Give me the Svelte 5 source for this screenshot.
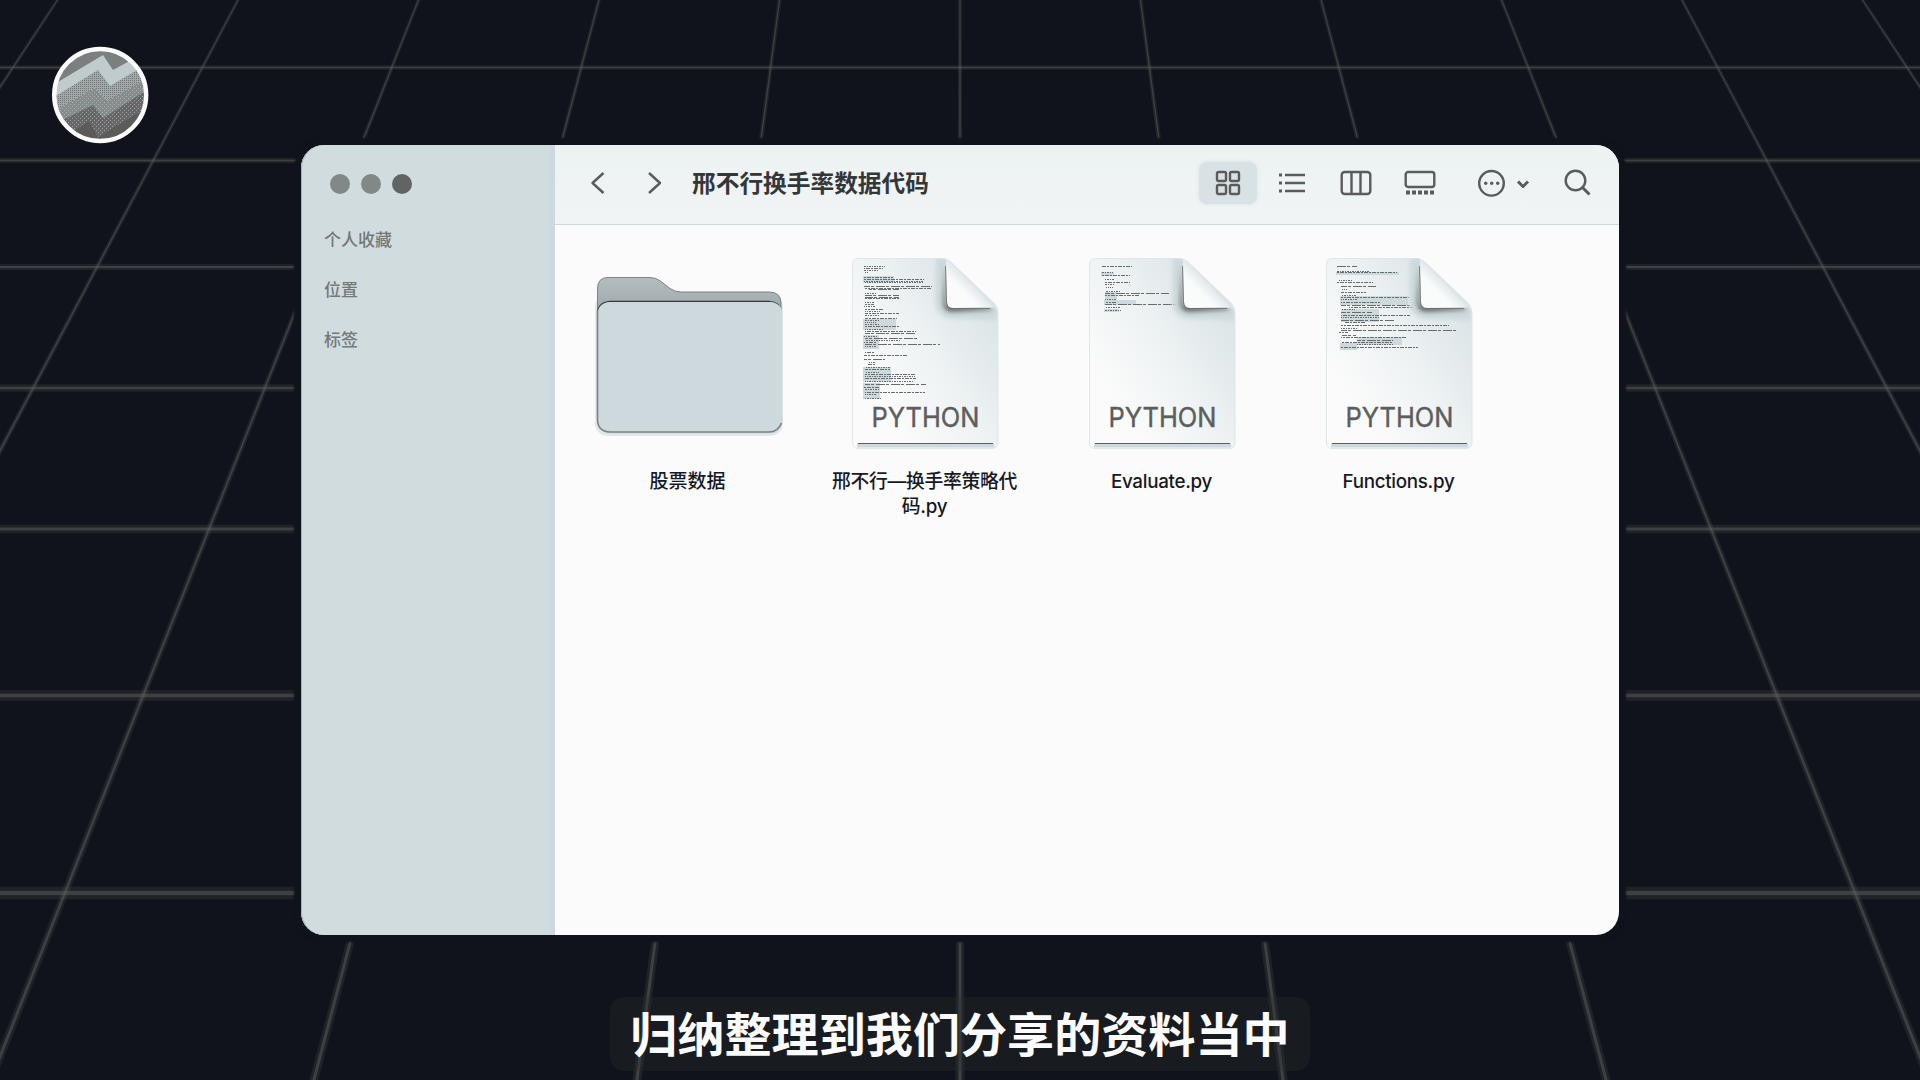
<script>
  // Perspective floor grid: horizontals as [y, thickness], verticals by column index.
  const rows = [[67.5, 2.2], [160.5, 2.6], [267, 3.2], [388, 3.8], [529, 4.4], [695.5, 5.4], [893, 6.4]];
  const cols = [-5, -4, -3, -2, -1, 0, 1, 2, 3, 4, 5].map((k) => {
    const top = 960 + k * 180.5;
    const end = 960 + k * (180.5 + 0.132 * 1080);
    return {
      core: `${top - 0.6},0 ${top + 0.6},0 ${end + 1.6},1080 ${end - 1.6},1080`,
      glow: `${top - 2},0 ${top + 2},0 ${end + 4.5},1080 ${end - 4.5},1080`
    };
  });

  // Thumbnail code lines: [y, x, width, dash pattern index]
  const dashes = ['2 1 1 1', '4 1 2 1', '9 1 3 2', '1 1'];
  const files = [
    {
      name: '邢不行—换手率策略代码.py',
      shade: [[18, 26, 31, 7], [18, 69, 33, 11], [18, 85, 16, 14], [18, 117, 28, 15], [18, 133, 17, 16]],
      code: [
        [16.5, 19, 21, 0], [18.5, 19, 19, 1], [20.5, 19, 14, 0], [22, 19, 5, 3],
        [27.5, 19, 29, 1], [29.5, 18, 61, 1], [31, 18, 61, 0], [32.5, 20, 58, 0],
        [36, 19, 68, 2], [38, 20, 67, 1], [39.5, 24, 30, 2], [43, 20, 12, 0], [45, 20, 34, 2], [47, 20, 34, 2], [48.5, 20, 34, 1],
        [52.5, 20, 10, 0], [54.5, 20, 9, 1], [56.5, 19, 12, 0], [59, 20, 18, 1], [61, 20, 15, 0], [63.5, 20, 34, 1], [65.5, 20, 15, 0],
        [68, 20, 32, 1], [70, 20, 15, 0], [72, 20, 12, 3], [74, 20, 15, 0], [76.5, 20, 34, 1], [79, 20, 18, 0],
        [81.5, 20, 51, 1], [83, 20, 51, 2], [86, 19, 14, 0], [88.5, 20, 53, 2], [90, 20, 35, 0], [92, 19, 13, 1], [94, 20, 75, 2], [96, 20, 12, 0],
        [102.5, 20, 9, 1], [105.5, 19, 44, 1], [109.5, 19, 21, 2], [112.5, 24, 6, 0], [114.5, 23, 7, 1],
        [117.5, 20, 26, 0], [119.5, 20, 25, 1], [122, 20, 14, 0], [124.5, 20, 50, 1], [126.5, 20, 50, 0], [128.5, 20, 51, 1], [131, 20, 49, 0],
        [134.5, 20, 61, 2], [137, 19, 15, 1], [139.5, 20, 15, 0], [142, 20, 60, 1], [144.5, 20, 12, 0], [148, 20, 16, 0]
      ]
    },
    {
      name: 'Evaluate.py',
      shade: [[19, 22, 13, 4], [23, 42, 12, 13], [22, 50, 32, 5], [22, 59, 15, 3]],
      code: [
        [16.5, 20, 30, 1], [22.5, 19, 12, 0], [25, 20, 28, 1], [29, 23, 9, 0], [32, 23, 25, 1], [34.5, 23, 9, 0], [37, 24, 7, 3],
        [41, 23, 16, 0], [43.5, 23, 64, 2], [45, 23, 34, 1], [49.5, 23, 12, 0], [52, 24, 11, 1], [54.5, 23, 74, 2], [57, 24, 15, 0], [60, 23, 16, 0]
      ]
    },
    {
      name: 'Functions.py',
      shade: [[17, 22, 63, 3], [21, 46, 68, 9], [22, 59, 38, 13], [21, 93, 17, 7], [38, 87, 45, 8]],
      code: [
        [16.5, 18, 20, 2], [21, 18, 32, 0], [22.5, 17, 61, 1], [30, 20, 14, 0], [32, 18, 36, 1], [36, 22, 35, 2], [39, 22, 7, 3],
        [42.5, 22, 25, 1], [45, 22, 16, 0], [47.5, 22, 68, 1], [49.5, 22, 16, 0], [52.5, 22, 39, 1], [55, 22, 74, 2], [57, 30, 64, 1],
        [59, 22, 14, 0], [62, 22, 31, 2], [65, 22, 69, 1], [67.5, 22, 39, 0], [70.5, 22, 54, 2], [72.5, 26, 20, 1], [75.5, 22, 108, 1], [78, 22, 16, 0],
        [80.5, 22, 117, 2], [82.5, 20, 9, 1], [85.5, 23, 14, 2], [87.5, 22, 66, 1], [90.5, 38, 36, 2], [92.5, 22, 52, 1], [94.5, 38, 36, 0], [97.5, 22, 77, 1]
      ]
    }
  ];
</script>

<div class="stage">
  <svg class="floor" viewBox="0 0 1920 1080" aria-hidden="true">
    {#each rows as [y, t]}
      <rect class="glow" x="0" y={y - t} width="1920" height={t * 2} />
      <rect class="core" x="0" y={y - t / 3} width="1920" height={t / 1.5} />
    {/each}
    {#each cols as c}
      <polygon class="glow" points={c.glow} />
      <polygon class="core" points={c.core} />
    {/each}
  </svg>

  <svg class="logo" viewBox="0 0 110 110" aria-hidden="true">
    <defs>
      <clipPath id="disc"><circle cx="54.2" cy="55" r="45" /></clipPath>
      <pattern id="grain" width="2" height="2" patternUnits="userSpaceOnUse">
        <rect width="1" height="1" fill="#5e5e5c" />
      </pattern>
      <pattern id="speck" width="4" height="4" patternUnits="userSpaceOnUse">
        <rect width="1" height="1" fill="#cdd9dc" /><rect x="2" y="2" width="1" height="1" fill="#cdd9dc" />
      </pattern>
    </defs>
    <g clip-path="url(#disc)">
      <rect width="110" height="110" fill="#7b7f7f" />
      <path d="M0 49 L57 15 L67 30 L100 12 V110 H0Z" fill="#c0cbce" />
      <path d="M0 62 L52 30 L64 46 L110 19 V110 H0Z" fill="#a0a9ab" />
      <path d="M0 62 L52 30 L64 46 L110 19 V110 H0Z" fill="url(#grain)" opacity=".7" />
      <path d="M0 76 L49 48 L61 61 L110 34 V110 H0Z" fill="#868b8c" />
      <path d="M0 88 L47 65 L57 78 L110 44 V110 H0Z" fill="#666766" />
      <path d="M0 76 L49 48 L61 61 L110 34 V110 H0Z" fill="url(#speck)" opacity=".5" />
      <path d="M20 96 L43 81 L52 97 L110 62 V110 H20Z" fill="#5b5b59" />
    </g>
    <circle cx="54.2" cy="55" r="46" fill="none" stroke="#fbfbfb" stroke-width="4.4" />
  </svg>

  <main class="window">
    <aside class="sidebar">
      <div class="lights"><i></i><i></i><i class="dark"></i></div>
      <p>个人收藏</p>
      <p>位置</p>
      <p>标签</p>
    </aside>

    <section class="content">
      <header class="toolbar">
        <svg class="nav" viewBox="0 0 72 28" width="72" height="28">
          <path d="M13.5 4 L2.5 14 L13.5 24 M59 4 L70 14 L59 24" />
        </svg>
        <h1>邢不行换手率数据代码</h1>
        <div class="tools">
          <span class="active">
            <svg viewBox="0 0 26 26" width="26" height="26">
              <rect x="2" y="2" width="9" height="9" rx="1.5" /><rect x="15" y="2" width="9" height="9" rx="1.5" />
              <rect x="2" y="15" width="9" height="9" rx="1.5" /><rect x="15" y="15" width="9" height="9" rx="1.5" />
            </svg>
          </span>
          <svg class="list" viewBox="0 0 28 24" width="28" height="24">
            <path d="M7 4 H27 M7 12 H27 M7 20 H27" />
            <path d="M1 4 H4 M1 12 H4 M1 20 H4" stroke-width="3" />
          </svg>
          <svg class="columns" viewBox="0 0 32 26" width="32" height="26">
            <rect x="1.7" y="2" width="28.6" height="22" rx="3" /><path d="M11.5 2 V24 M20.5 2 V24" />
          </svg>
          <svg class="gallery" viewBox="0 0 32 26" width="32" height="26">
            <rect x="1.7" y="2" width="28.6" height="15" rx="2.5" />
            <path class="thumbs" d="M2 22.5 H30" />
          </svg>
          <svg class="more" viewBox="0 0 54 28" width="54" height="28">
            <circle cx="14.5" cy="14.3" r="12.3" />
            <g class="fill"><circle cx="8.7" cy="14.3" r="1.7" /><circle cx="14.7" cy="14.3" r="1.7" /><circle cx="20.7" cy="14.3" r="1.7" /></g>
            <path class="bold" d="M41 12.5 L46 17.5 L51 12.5" />
          </svg>
          <svg class="search" viewBox="0 0 28 28" width="28" height="28">
            <circle cx="11.5" cy="11.5" r="9.8" /><path class="bold" d="M18.5 18.5 L25.5 25.5" />
          </svg>
        </div>
      </header>

      <div class="files">
        <figure>
          <svg viewBox="0 0 200 205" width="200" height="205">
            <defs>
              <linearGradient id="flap" x1="0" y1="0" x2="0" y2="1">
                <stop offset="0" stop-color="#b4bec0" /><stop offset=".12" stop-color="#a9b2b4" /><stop offset=".36" stop-color="#8f9698" />
              </linearGradient>
            </defs>
            <rect x="7" y="44" width="188" height="142" rx="13" fill="#e1e8ea" />
            <path d="M9.500 172 V39 Q9.500 27.500 20 27.500 H62 Q68 27.500 73 31.500 L82 38.500 Q87 42 93 42 H181 Q193 42 193 53 V90 H9.500Z" fill="url(#flap)" stroke="#7d8384" />
            <path d="M9.500 64 Q10 52.500 22 51.500 H181 Q192 52 193 62" fill="none" stroke="#343a3f" stroke-width="1.3" />
            <rect x="9.500" y="52" width="185" height="131.500" rx="12" fill="#cdd9dd" />
            <path d="M9.500 60 V170 Q10 181.500 22 182 H181 Q190 182 193.500 173" fill="none" stroke="#7b8183" stroke-width="1.6" />
          </svg>
          <figcaption>股票数据</figcaption>
        </figure>

        {#each files as file, i}
          <figure>
            <svg viewBox="0 0 160 205" width="160" height="205">
              <defs>
                <linearGradient id="paper{i}" x1=".95" y1=".25" x2=".25" y2=".85">
                  <stop offset="0" stop-color="#dbe4e7" /><stop offset=".55" stop-color="#eff3f4" /><stop offset="1" stop-color="#fbfbfb" />
                </linearGradient>
                <linearGradient id="curl{i}" x1="0" y1="1" x2="1" y2="0">
                  <stop offset="0" stop-color="#fbfbfb" /><stop offset=".35" stop-color="#fafbfb" /><stop offset=".55" stop-color="#dde5e8" />
                </linearGradient>
                <filter id="soft{i}" x="-30%" y="-30%" width="160%" height="160%"><feGaussianBlur stdDeviation="2" /></filter>
                <clipPath id="sheet{i}"><path d="M13 8.500 H100 L152.500 61 V193 Q152.500 197 147 197 H13 Q7.500 197 7.500 191 V15 Q7.500 8.500 13 8.500Z" /></clipPath>
              </defs>
              <path d="M13 8.500 H97 Q102 8.500 106 12 L149 53 Q153 57 153 63 V193 Q152.500 198.500 147 198.500 H13 Q7.500 198 7.500 192 V15 Q7.500 8.500 13 8.500Z" fill="url(#paper{i})" stroke="#dfe7e9" />
              {#each file.shade as [x, y, w, h]}
                <rect {x} {y} width={w} height={h} fill="#cdd9dc" />
              {/each}
              {#each file.code as [y, x, w, d]}
                <path d="M{x} {Math.floor(y) + 0.5} H{x + w}" stroke="#696c6c" stroke-dasharray={dashes[d]} stroke-dashoffset={Math.floor(y * 3) % 7} />
              {/each}
              <g clip-path="url(#sheet{i})">
                <path d="M97 8 L96 50 Q96 63 108 63 L152 64" fill="none" stroke="#cdd9dc" stroke-width="12" filter="url(#soft{i})" />
                <path d="M100 14 L98 50 Q97 62 108 62 L146 60 L148 58 L101 55 Z" fill="#6a6e6f" filter="url(#soft{i})" />
              </g>
              <path d="M101 10 L103 10 L149 57.500 L108 58 Q102 58 102 52Z" fill="url(#curl{i})" />
              <path d="M100.500 16 L101.500 52 Q102 58.500 108 58.500 H145" fill="none" stroke="#696c6c" opacity=".8" />
              <path d="M12 195.500 H149" stroke="#cdd9dc" stroke-width="4" />
              <path d="M13 193.500 H148" stroke="#5e605f" />
              <text x="26.500" y="177" textLength="108" lengthAdjust="spacingAndGlyphs">PYTHON</text>
            </svg>
            <figcaption class="doc">{file.name}</figcaption>
          </figure>
        {/each}
      </div>
    </section>
  </main>

  <div class="caption"><span>归纳整理到我们分享的资料当中</span></div>
</div>

<style>
  :global(body) {
    background: #10131b;
    overflow: hidden;
  }
  .stage {
    position: relative;
    box-sizing: border-box;
    width: 1920px;
    height: 1080px;
    padding: 145px 301px 145px 301px;
    overflow: hidden;
    background: #10131b;
    font-family: Inter, 'Noto Sans CJK SC', sans-serif;
  }
  .floor {
    position: absolute;
    inset: 0;
    width: 1920px;
    height: 1080px;
  }
  .glow {
    fill: #5e5e5c;
    opacity: 0.2;
  }
  .core {
    fill: #5e5e5c;
    opacity: 0.5;
  }
  .logo {
    position: absolute;
    left: 46px;
    top: 40px;
    width: 110px;
    height: 110px;
  }
  .window {
    position: relative;
    display: flex;
    height: 790px;
    border-radius: 23px;
    background: #fbfbfb;
    box-shadow: 0 0 2px 7px #10131b;
  }
  .sidebar {
    width: 254px;
    box-sizing: border-box;
    padding: 29px 0 0 23px;
    border-radius: 23px 0 0 23px;
    background: #d1dcdf;
    box-shadow: inset -6px 0 #cdd9de, inset 1px 0 #a9b2b6;
  }
  .lights {
    display: flex;
    gap: 11px;
    padding-left: 6px;
    margin-bottom: 21px;
  }
  .lights i {
    width: 20px;
    height: 20px;
    border-radius: 50%;
    background: #828888;
  }
  .lights .dark {
    background: #626464;
  }
  .sidebar p {
    margin: 0;
    height: 50px;
    line-height: 50px;
    font-size: 17px;
    font-weight: 500;
    color: #737878;
  }
  .content {
    flex: 1;
  }
  .toolbar {
    display: flex;
    align-items: center;
    box-sizing: border-box;
    height: 80px;
    padding: 0 27px 4px 35px;
    border-bottom: 1px solid #cdd9dc;
    border-radius: 0 23px 0 0;
    background: linear-gradient(#edf2f3, #f0f4f5);
  }
  .toolbar svg {
    fill: none;
    stroke: #5a5b5a;
    stroke-width: 2.4;
    stroke-linejoin: round;
  }
  .toolbar .fill {
    fill: #5a5b5a;
    stroke: none;
  }
  .bold {
    stroke-width: 3;
  }
  .thumbs {
    stroke-width: 4;
    stroke-dasharray: 4 2;
  }
  h1 {
    margin: 2px 0 0 30px;
    font-size: 23.7px;
    line-height: 30px;
    font-weight: 700;
    color: #34373a;
    white-space: nowrap;
  }
  .tools {
    display: flex;
    align-items: center;
    margin-left: auto;
  }
  .active {
    display: grid;
    place-items: center;
    width: 58px;
    height: 42px;
    border-radius: 8px;
    background: #d8e2e4;
    box-shadow: 0 0 4px #d8e2e4;
  }
  .list {
    margin-left: 21px;
  }
  .columns {
    margin-left: 34px;
  }
  .gallery {
    margin-left: 32px;
  }
  .more {
    margin-left: 41px;
  }
  .search {
    margin-left: 33px;
  }
  .files {
    display: grid;
    grid-template-columns: repeat(4, 237px);
    padding: 25px 0 0 14px;
  }
  figure {
    margin: 0;
    display: flex;
    flex-direction: column;
    align-items: center;
  }
  figure text {
    font-family: Inter, sans-serif;
    font-size: 27px;
    fill: #5c5e5e;
    stroke: #5c5e5e;
    stroke-width: 0.4;
  }
  figcaption {
    width: 196px;
    margin-top: 14px;
    text-align: center;
    font-size: 19px;
    line-height: 25px;
    font-weight: 500;
    color: #16191f;
  }
  .doc {
    font-size: 18.8px;
    letter-spacing: -0.3px;
  }
  .caption {
    position: absolute;
    left: 610px;
    top: 997px;
    display: grid;
    place-items: center;
    width: 700px;
    height: 74px;
    border-radius: 14px;
    background: rgba(44, 46, 48, 0.3);
  }
  .caption span {
    font-family: 'Noto Sans CJK SC', sans-serif;
    font-size: 47.1px;
    line-height: 70px;
    padding-bottom: 4px;
    font-weight: 700;
    color: #fbfbfb;
    white-space: nowrap;
  }
</style>
